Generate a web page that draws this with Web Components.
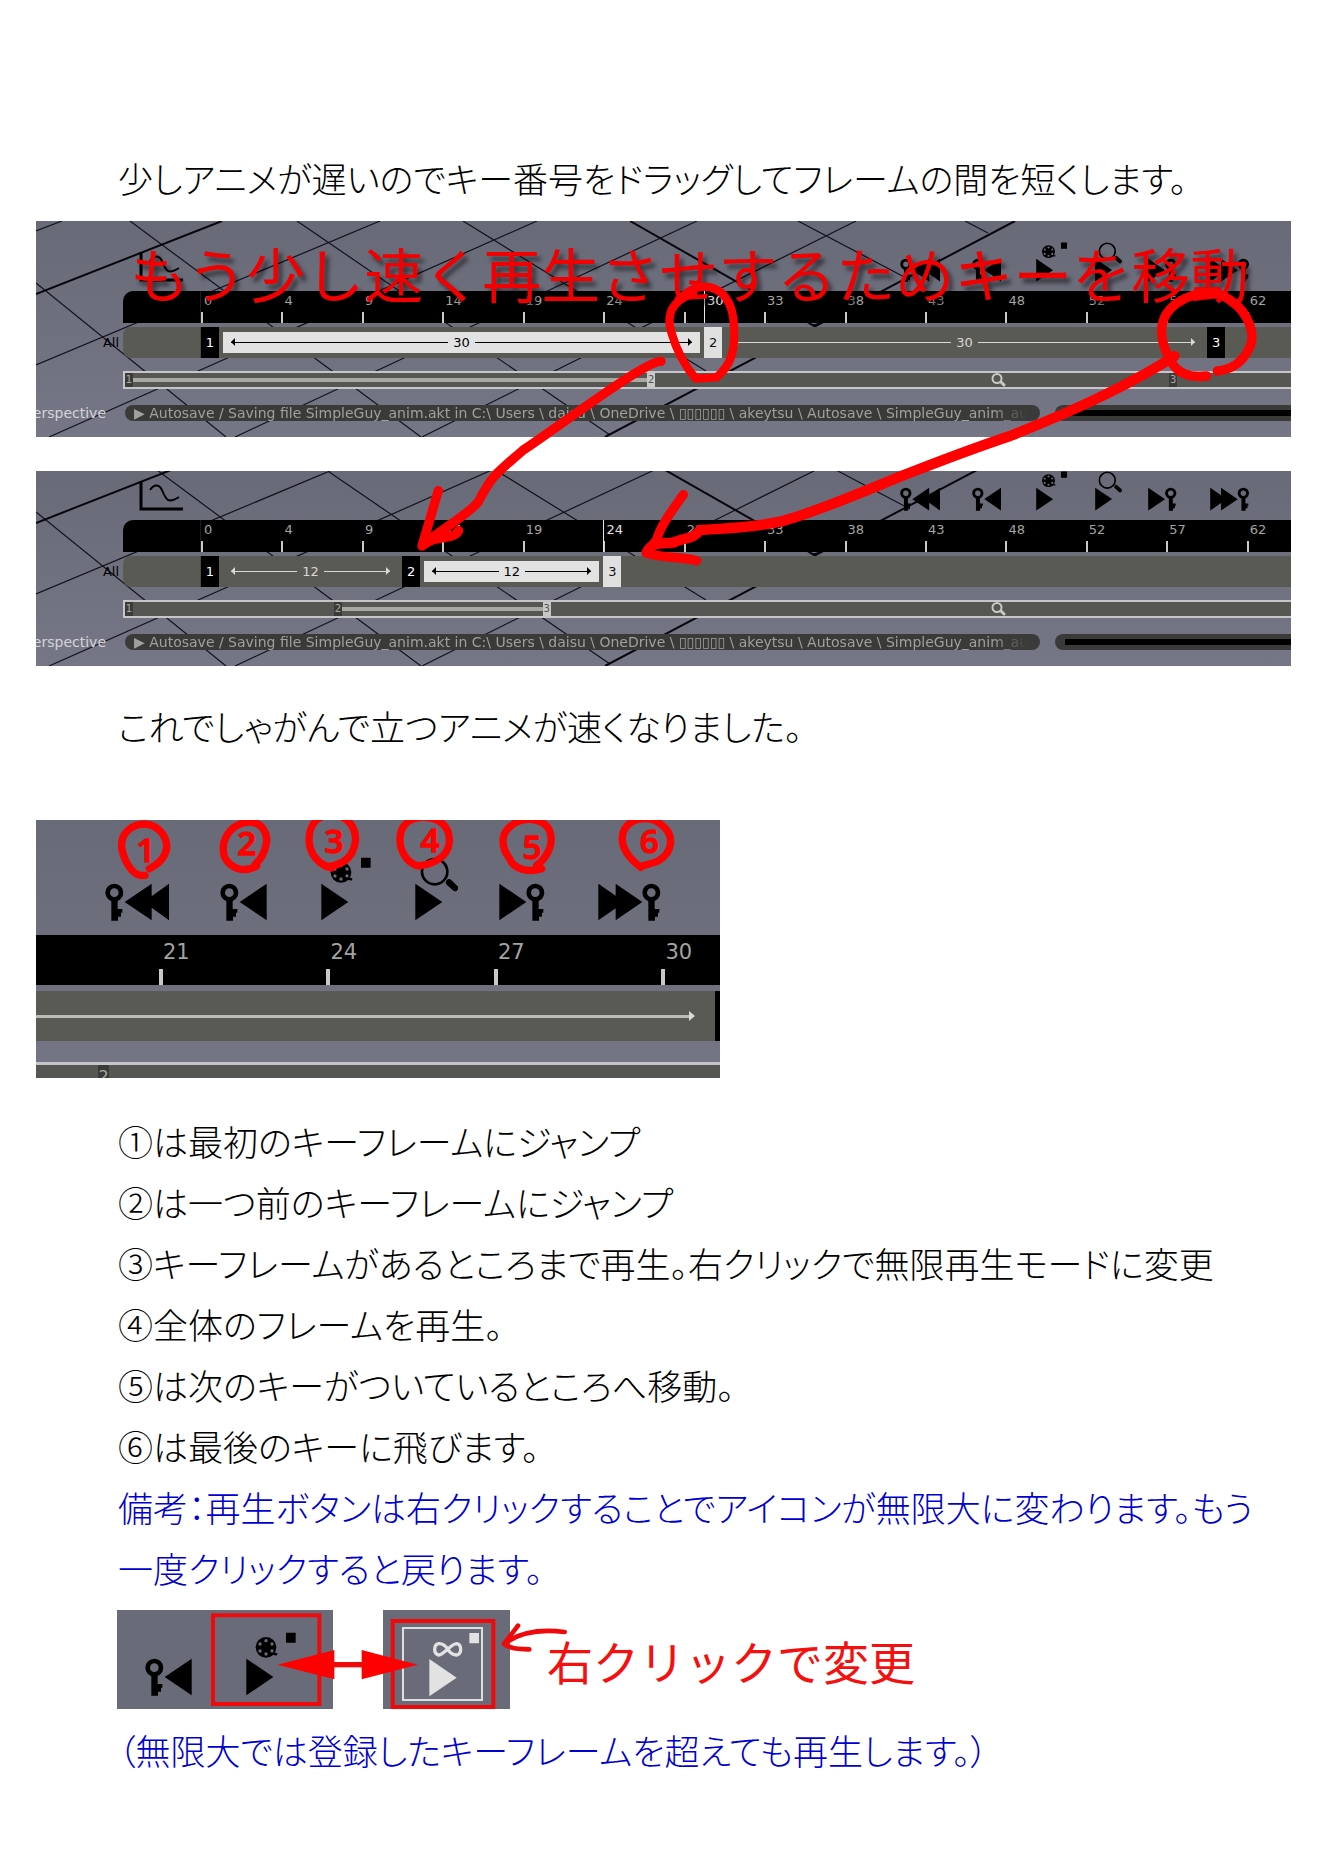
<!DOCTYPE html>
<html lang="ja">
<head>
<meta charset="utf-8">
<title>キーフレームの再生</title>
<style>
  html, body { margin: 0; background: #fff; }
  body { font-family: "Noto Sans CJK JP", sans-serif; color: #000; }
</style>
</head>
<body>
<doc-page></doc-page>
<script>
const define = (name, render) => customElements.define(name, class extends HTMLElement {
  connectedCallback() {
    if (this.shadowRoot) return;
    this.attachShadow({ mode: 'open' }).innerHTML = render(this);
  }
});
const attr = (el, name, fallback = '') => el.getAttribute(name) ?? fallback;

/* ---------- Icons ---------- */
const key = x => `<ellipse cx="${x + 28}" cy="247" rx="20" ry="20" fill="none" stroke="currentColor" stroke-width="14"/>
  <path d="M${x + 19} 264h19v32h14v11h-4v12h-9v12h-20z"/>`;
const reel = `<circle cx="935" cy="186" r="31"/>
  <g fill="#6a6b78"><circle cx="935" cy="166" r="5"/><circle cx="935" cy="206" r="5"/><circle cx="917" cy="176" r="5"/><circle cx="953" cy="176" r="5"/><circle cx="917" cy="197" r="5"/><circle cx="953" cy="197" r="5"/></g>
  <path d="M950 206q12-2 18 2" fill="none" stroke="currentColor" stroke-width="7"/>`;
const ICONS = {
  first: ['226 140 192 192', '最初のキーへ', key(226) + '<path d="M285 275l81-55v38l52-38v110l-52-38v38z"/>'],
  prev: ['572 140 140 192', '前のキーへ', key(572) + '<path d="M631 275l81-55v110z"/>'],
  play: ['875 140 150 192', '再生', '<path d="M876 220l81 55-81 55zM995 142h29v30h-29z"/>' + reel],
  all: ['138 140 130 192', '全体を再生', '<path d="M139 220l81 55-81 55z"/><circle cx="197" cy="184" r="38" fill="none" stroke="currentColor" stroke-width="8"/><path d="M240 216l18 17" stroke="currentColor" stroke-width="19" stroke-linecap="round"/>'],
  next: ['390 140 138 192', '次のキーへ', '<path d="M391 220l81 55-81 55z"/>' + key(471)],
  last: ['687 140 189 192', '最後のキーへ', '<path d="M688 220l52 36v-36l80 55-80 55v-36l-52 36z"/>' + key(819)],
  loop: ['987 125 150 192', '無限再生', '<path d="M988 203l82 56-82 56zM1108 125h29v31h-29z"/><path d="M1044 174C1032 158 1022 156 1016 157C1000 160 1000 188 1016 191C1030 192 1054 157 1070 157C1086 159 1086 189 1070 191C1058 191 1050 184 1044 174z" fill="none" stroke="currentColor" stroke-width="10"/>']
};
define('akt-icon', el => {
  const [box, , body] = ICONS[attr(el, 'name')];
  return `<style>:host{display:block}svg{display:block;height:var(--icon,40px);width:auto;fill:currentColor}</style>
  <svg viewBox="${box}" aria-hidden="true">${body}</svg>`;
});
define('akt-transport', el => `<style>
  :host{display:grid;grid-template-columns:var(--cols);justify-items:start;align-items:end}
  button{all:unset;display:block;color:inherit}
  </style>${attr(el, 'icons').split(' ').map(n =>
    `<button type="button" aria-label="${ICONS[n][1]}"><akt-icon name="${n}"></akt-icon></button>`).join('')}`);

/* ---------- Timeline parts ---------- */
define('akt-ruler', el => {
  const current = attr(el, 'current');
  const cells = attr(el, 'labels').split(',').map(t => `<div class="cell"><span>${t === current ? '' : t}</span></div>`).join('');
  const head = current ? `<div class="head" style="left:${current / 65 * 100}%">${current}</div>` : '';
  return `<style>
  :host{display:flex;background:#000;color:#a4a4a0;height:var(--ruler-h,32px);overflow:hidden;border-radius:var(--ruler-r,10px) 0 0 0;
    font:var(--ruler-fs,13px)/var(--ruler-lh,20px) "DejaVu Sans",sans-serif}
  .lead{flex:none;width:var(--lead,78px);box-sizing:border-box;border-right:1px solid var(--lead-line,#1c1c1c)}
  .lane{flex:1;display:flex;position:relative}
  .cell{flex:20 1 0;min-width:0;display:flex;flex-direction:column;justify-content:space-between;white-space:nowrap}
  .cell:last-child{flex-grow:var(--tail,11)}
  .cell span{padding-left:var(--label-gap,3px);height:var(--ruler-lh,20px)}
  .cell::after{content:"";width:var(--tick-w,2px);height:var(--tick-h,11px);background:#c8c8c4}
  .head{position:absolute;top:0;bottom:0;border-left:1px solid #e8e8e8;color:#e0e0e0;padding-left:2px}
  </style><div class="lead"></div><div class="lane">${head}${cells}</div>`;
});
/* spans: "frames:key:style" where style is sel, plain or none; the key in "on" is lit */
define('akt-track', el => {
  const on = attr(el, 'on');
  return `<style>
  :host{display:flex;height:31px;background:#5a5a54;border-radius:8px 0 0 8px;color:#d8d8d6;font:13px/21px "DejaVu Sans",sans-serif}
  .lead{flex:none;width:77px;border-right:1px solid #4a4a46}
  .group{min-width:0;display:flex;align-items:stretch}
  .key{flex:none;width:18px;background:#000;color:#fff;display:flex;align-items:center;justify-content:center}
  .key.on{background:#e0e0e0;color:#111}
  .seg{flex:1;display:flex;align-items:center;gap:5px;margin:5px 4px;padding:0 8px}
  .seg.sel{background:#e2e2e2;color:#000}
  .seg i{flex:1;height:1px;background:currentColor;position:relative}
  .seg i::after{content:"";position:absolute;top:-4px;border:4px solid transparent}
  .seg i:first-child::after{left:0;border-right-color:currentColor;border-left:0}
  .seg i:last-child::after{right:0;border-left-color:currentColor;border-right:0}
  </style><div class="lead"></div>${attr(el, 'spans').split(' ').map(s => {
    const [n, k, kind] = s.split(':');
    return `<div class="group" style="flex:${n} 1 0"><div class="key${k === on ? ' on' : ''}">${k}</div>${
      kind === 'none' ? '' : `<div class="seg ${kind}"><i></i>${n}<i></i></div>`}</div>`;
  }).join('')}`;
});
define('akt-overview', el => {
  const on = attr(el, 'on');
  return `<style>
  :host{display:flex;position:relative;height:14px;background:#565652;border:2px solid #c6c6c8;border-right:0;color:#a8a8a4;font:10px/14px "DejaVu Sans",sans-serif}
  .group{min-width:0;display:flex;align-items:center}
  .key{flex:none;width:8px;height:14px;background:#3a3a38;text-align:center}
  .key.on{background:#c8c8c6;color:#555}
  .bar{flex:1;height:4px;background:#a9a9a4}
  svg{position:absolute;right:285px;top:0;width:15px;height:14px;fill:none;stroke:#c8c8c4}
  </style>${attr(el, 'spans').split(' ').map(s => {
    const [n, k, kind] = s.split(':');
    return `<div class="group" style="flex:${n} 1 0"><div class="key${k === on ? ' on' : ''}">${k}</div>${kind === 'sel' ? '<div class="bar"></div>' : ''}</div>`;
  }).join('')}<svg viewBox="0 0 30 28"><circle cx="12" cy="11" r="9" stroke-width="4"/><path d="M20 18l6 6" stroke-width="6" stroke-linecap="round"/></svg>`;
});
define('akt-status', () => `<style>
  :host{display:flex;gap:15px;padding-left:2px;height:16px;font:14px/16px "DejaVu Sans",sans-serif;color:#a0a09c}
  .msg{flex:none;width:78.5%;box-sizing:border-box;background:#3a3a38;border-radius:8px;padding:0 12px 0 9px}
  .clip{overflow:hidden;white-space:pre;-webkit-mask:linear-gradient(90deg,#000 96%,transparent 100%);mask:linear-gradient(90deg,#000 96%,transparent 100%)}
  .meter{flex:1;background:#3a3a38;border-radius:8px 0 0 8px;padding:5px 0 5px 10px}
  .meter div{height:6px;background:#000}
  </style><div class="msg"><div class="clip"><slot></slot></div></div><div class="meter"><div></div></div>`);

define('akt-panel', el => {
  const current = attr(el, 'current'), on = attr(el, 'on'), spans = attr(el, 'spans'), map = attr(el, 'map');
  return `<style>
  :host{display:block;position:relative;overflow:hidden;background:linear-gradient(#696a77,#767786);padding-bottom:16px;isolation:isolate;
    font:13px/16px "DejaVu Sans",sans-serif}
  .grid{position:absolute;left:0;bottom:0;width:100%;height:216px;z-index:-1;fill:none;stroke:#11121e;stroke-width:1.2}
  .grid .axis{stroke:#06060c;stroke-width:2}
  .tools{display:flex;justify-content:space-between;align-items:flex-end;box-sizing:border-box;height:var(--tools-h);padding:0 0 9px 103px}
  .curve{width:44px;height:30px;fill:none;stroke:#000}
  akt-transport{--cols:72px 64px 59px 53px 62px 40px;--icon:40px;margin-right:41px;color:#000}
  .row{display:flex;align-items:center}
  .row > :last-child{flex:1;min-width:0}
  .name{flex:none;width:87px;box-sizing:border-box;padding-right:4px;text-align:right}
  .view{display:flex;justify-content:flex-end;color:#d4d4d8;padding-right:17px;font-size:14px}
  .track{margin:4px 0 13px}
  .over{margin-bottom:16px}
  </style>
  <svg class="grid" viewBox="0 0 1255 216" preserveAspectRatio="none" aria-hidden="true">
    <path d="M0 10L26 0M0 144L344 0M13 216L501 0M199 216L661 0M386 216L820 0M0 62L190 216M94 0L385 216M261 0L574 214M427 0L670 150M762 0L874 59M929 0L952 12"/>
    <path class="axis" d="M0 73L186 0M569 216L979 0M594 0L773 102Q779 107 785 101"/>
  </svg>
  <div class="tools">
    <svg class="curve" viewBox="0 0 44 30" aria-hidden="true"><path d="M2 0V28H44" stroke-width="3"/><path d="M11 9C15 3 20 3 23 9C27 19 29 23 40 16" stroke-width="2"/></svg>
    <akt-transport icons="first prev play all next last"></akt-transport>
  </div>
  <div class="row"><div class="name"></div><akt-ruler current="${current}" labels="${attr(el, 'labels')}"></akt-ruler></div>
  <div class="row track"><div class="name">All</div><akt-track on="${on}" spans="${spans}"></akt-track></div>
  <div class="row over"><div class="name"></div><akt-overview on="${on}" spans="${map}"></akt-overview></div>
  <div class="row"><div class="name view">erspective</div><akt-status>▶ Autosave / Saving file SimpleGuy_anim.akt in C:\\ Users \\ daisu \\ OneDrive \\ ▯▯▯▯▯▯ \\ akeytsu \\ Autosave \\ SimpleGuy_anim_au</akt-status></div>`;
});

/* ---------- Figures ---------- */
define('fig-compare', () => `<style>
  :host{display:flex;flex-direction:column;gap:34px;position:relative}
  .slow{--tools-h:70px}.fast{--tools-h:49px}
  .title{position:absolute;left:94px;top:10px;margin:0;white-space:nowrap;color:#f00000;font:59px/84px "Noto Sans CJK JP",sans-serif;text-shadow:4px 5px 4px rgba(0,0,0,.5)}
  svg{position:absolute;inset:0;width:100%;height:100%;fill:none;stroke:#f00;stroke-linecap:round;stroke-linejoin:round;pointer-events:none}
  </style>
  <akt-panel class="slow" current="30" on="2" labels="0,4,9,14,19,24,,33,38,43,48,52,57,62" spans="30:1:sel 30:2:plain 5:3:none" map="30:1:sel 30:2:none 7:3:none"></akt-panel>
  <akt-panel class="fast" current="24" on="3" labels="0,4,9,14,19,24,28,33,38,43,48,52,57,62" spans="12:1:plain 12:2:sel 41:3:none" map="12:1:none 12:2:sel 43:3:none"></akt-panel>
  <p class="title">もう少し速く再生させするためキーを移動</p>
  <svg viewBox="18 243 3765 1335" preserveAspectRatio="none" aria-hidden="true">
    <path stroke-width="25" d="M1990 460C1930 480 1905 520 1925 580C1945 650 1975 690 1997 716L2060 712C2110 670 2115 620 2112 560C2110 490 2080 440 2020 440C1990 442 1960 465 1945 480"/>
    <path stroke-width="28" d="M1893 664C1850 660 1600 850 1480 930C1400 1000 1390 1000 1345 1085C1320 1120 1230 1170 1176 1218L1225 1052M1176 1218C1220 1180 1265 1205 1286 1172"/>
    <path stroke-width="28" d="M3530 708C3480 714 3440 704 3415 650C3385 590 3385 530 3440 490C3500 450 3560 450 3600 480C3660 520 3680 590 3655 630C3630 680 3590 690 3562 693"/>
    <path stroke-width="31" d="M3434 648C3300 735 3100 825 2940 888C2800 935 2700 975 2610 1010C2500 1055 2350 1120 2250 1145C2150 1165 2080 1165 2010 1170C1990 1200 1960 1192 1930 1208C1890 1212 1865 1205 1850 1238"/>
    <path stroke-width="28" d="M1960 1064C1920 1120 1890 1160 1880 1200L1850 1238C1880 1255 1950 1248 2000 1262"/>
  </svg>`);

define('fig-buttons', () => `<style>
  :host{display:block;position:relative;overflow:hidden;max-width:684px;background:linear-gradient(#696a77,#747585)}
  .tools{display:flex;align-items:flex-end;height:101px;padding:0 0 14px 69px}
  akt-transport{--cols:115px 101px 94px 84px 99px 63px;--icon:64px;color:#000}
  akt-ruler{--ruler-h:50px;--ruler-r:0px;--ruler-fs:21px;--ruler-lh:34px;--lead:123px;--lead-line:#000;--tail:7;--label-gap:4px;--tick-w:4px;--tick-h:16px}
  .track{display:flex;align-items:center;height:50px;margin:6px 0 21px;background:#5a5a54}
  .line{flex:1;height:3px;background:#bcbcb6}
  .tip{border:5px solid transparent;border-left:6px solid #d8d8d4;border-right:0;margin-right:20px}
  .edge{width:5px;height:50px;background:#000}
  .over{height:13px;border-top:3px solid #c6c6ca;background:#565652;padding-left:62px;overflow:hidden}
  .key{width:11px;height:20px;background:#3a3a38;color:#a8a8a4;font:16px/24px "DejaVu Sans",sans-serif;text-align:center}
  svg.notes{position:absolute;left:0;top:0;width:100%;height:258px;fill:none;stroke:#f00;stroke-width:22;stroke-linecap:round}
  text{fill:#f00;stroke:#f00;stroke-width:4;font:600 100px "Open Sans",sans-serif;text-anchor:middle}
  </style>
  <div class="tools"><akt-transport icons="first prev play all next last"></akt-transport></div>
  <akt-ruler labels="21,24,27,30"></akt-ruler>
  <div class="track"><div class="line"></div><div class="tip"></div><div class="edge"></div></div>
  <div class="over"><div class="key">2</div></div>
  <svg class="notes" viewBox="18 30 2052 774" preserveAspectRatio="none">
    <path d="M345 196C310 202 285 160 275 115C270 65 310 42 345 42C390 45 412 85 410 115C405 145 380 165 358 176"/>
    <path d="M680 168C640 190 600 175 583 140C570 90 600 42 655 36C700 35 715 75 708 105C702 135 690 150 676 162"/>
    <path d="M905 174C865 165 838 130 837 90C838 40 865 15 905 15C950 15 980 50 976 95C970 140 940 165 890 170"/>
    <path d="M1165 168C1130 160 1108 120 1110 85C1112 40 1145 20 1185 22C1230 25 1260 50 1258 95C1255 140 1210 162 1175 166"/>
    <path d="M1535 176C1490 190 1450 175 1438 145C1415 115 1410 75 1440 50C1480 15 1540 25 1558 60C1575 100 1550 145 1520 166"/>
    <path d="M1832 172C1790 140 1768 105 1780 65C1800 20 1860 15 1895 45C1935 75 1930 130 1880 155L1830 170"/>
    <text x="347" y="155">1</text><text x="650" y="134">2</text><text x="912" y="130">3</text>
    <text x="1200" y="126">4</text><text x="1506" y="148">5</text><text x="1858" y="130">6</text>
  </svg>`);

define('fig-loop', () => `<style>
  :host{display:flex;align-items:stretch;position:relative;height:99px}
  .shot{box-sizing:border-box;background:#6a6b78;display:flex;align-items:flex-end}
  .a{width:216px;padding:0 0 13px 28px;margin-right:50px}
  .b{width:127px;padding:17px 27px 8px 19px;margin-right:37px;align-items:stretch}
  akt-transport{--icon:64px;--cols:101px 50px;color:#000}
  .b .frame{flex:1;box-sizing:border-box;border:2px solid #dedee0;padding:4px 0 0 25px}
  .b akt-transport{--cols:50px;color:#e2e2e2}
  .hand{align-self:center;margin:0;color:#f51010;white-space:nowrap;font:46px/60px "Noto Sans CJK JP",sans-serif}
  svg{position:absolute;left:0;top:0;width:450px;height:99px;fill:none;stroke:#ee0a0a}
  </style>
  <div class="shot a"><akt-transport icons="prev play"></akt-transport></div>
  <div class="shot b"><div class="frame"><akt-transport icons="loop"></akt-transport></div></div>
  <p class="hand">右クリックで変更</p>
  <svg viewBox="51 60 1350 297" aria-hidden="true">
    <path stroke-width="12" d="M339 76H658V342H339zM878 93H1180V351H878z"/>
    <path stroke-width="16" d="M700 224H788"/>
    <path fill="#f00" stroke="none" d="M532 224L703 180V268zM953 224L785 180V268z"/>
    <path stroke-width="14" stroke-linecap="round" d="M1394 126C1330 118 1260 125 1212 162L1254 107M1212 162C1240 180 1260 176 1288 178"/>
  </svg>`);

/* ---------- Text and page ---------- */
define('doc-text', () => `<style>
  :host{display:block;padding:0 37px 0 118px;font:300 35px/61px "Noto Sans CJK JP",sans-serif;font-feature-settings:"palt"}
  :host([note]){color:#0000d0}
  p{margin:0}
  </style><p><slot></slot></p>`);
define('doc-page', () => `<style>
  :host{display:block;padding:147px 0 95px}
  fig-compare{margin:13px 37px 29px 36px}
  fig-buttons{margin:64px 37px 32px 36px}
  fig-loop{margin:12px 37px 10px 117px}
  </style>
  <doc-text>少しアニメが遅いのでキー番号をドラッグしてフレームの間を短くします。</doc-text>
  <fig-compare></fig-compare>
  <doc-text>これでしゃがんで立つアニメが速くなりました。</doc-text>
  <fig-buttons></fig-buttons>
  <doc-text>①は最初のキーフレームにジャンプ</doc-text>
  <doc-text>②は一つ前のキーフレームにジャンプ</doc-text>
  <doc-text>③キーフレームがあるところまで再生。右クリックで無限再生モードに変更</doc-text>
  <doc-text>④全体のフレームを再生。</doc-text>
  <doc-text>⑤は次のキーがついているところへ移動。</doc-text>
  <doc-text>⑥は最後のキーに飛びます。</doc-text>
  <doc-text note>備考：再生ボタンは右クリックすることでアイコンが無限大に変わります。もう<br>一度クリックすると戻ります。</doc-text>
  <fig-loop></fig-loop>
  <doc-text note>（無限大では登録したキーフレームを超えても再生します。）</doc-text>`);
</script>
</body>
</html>
